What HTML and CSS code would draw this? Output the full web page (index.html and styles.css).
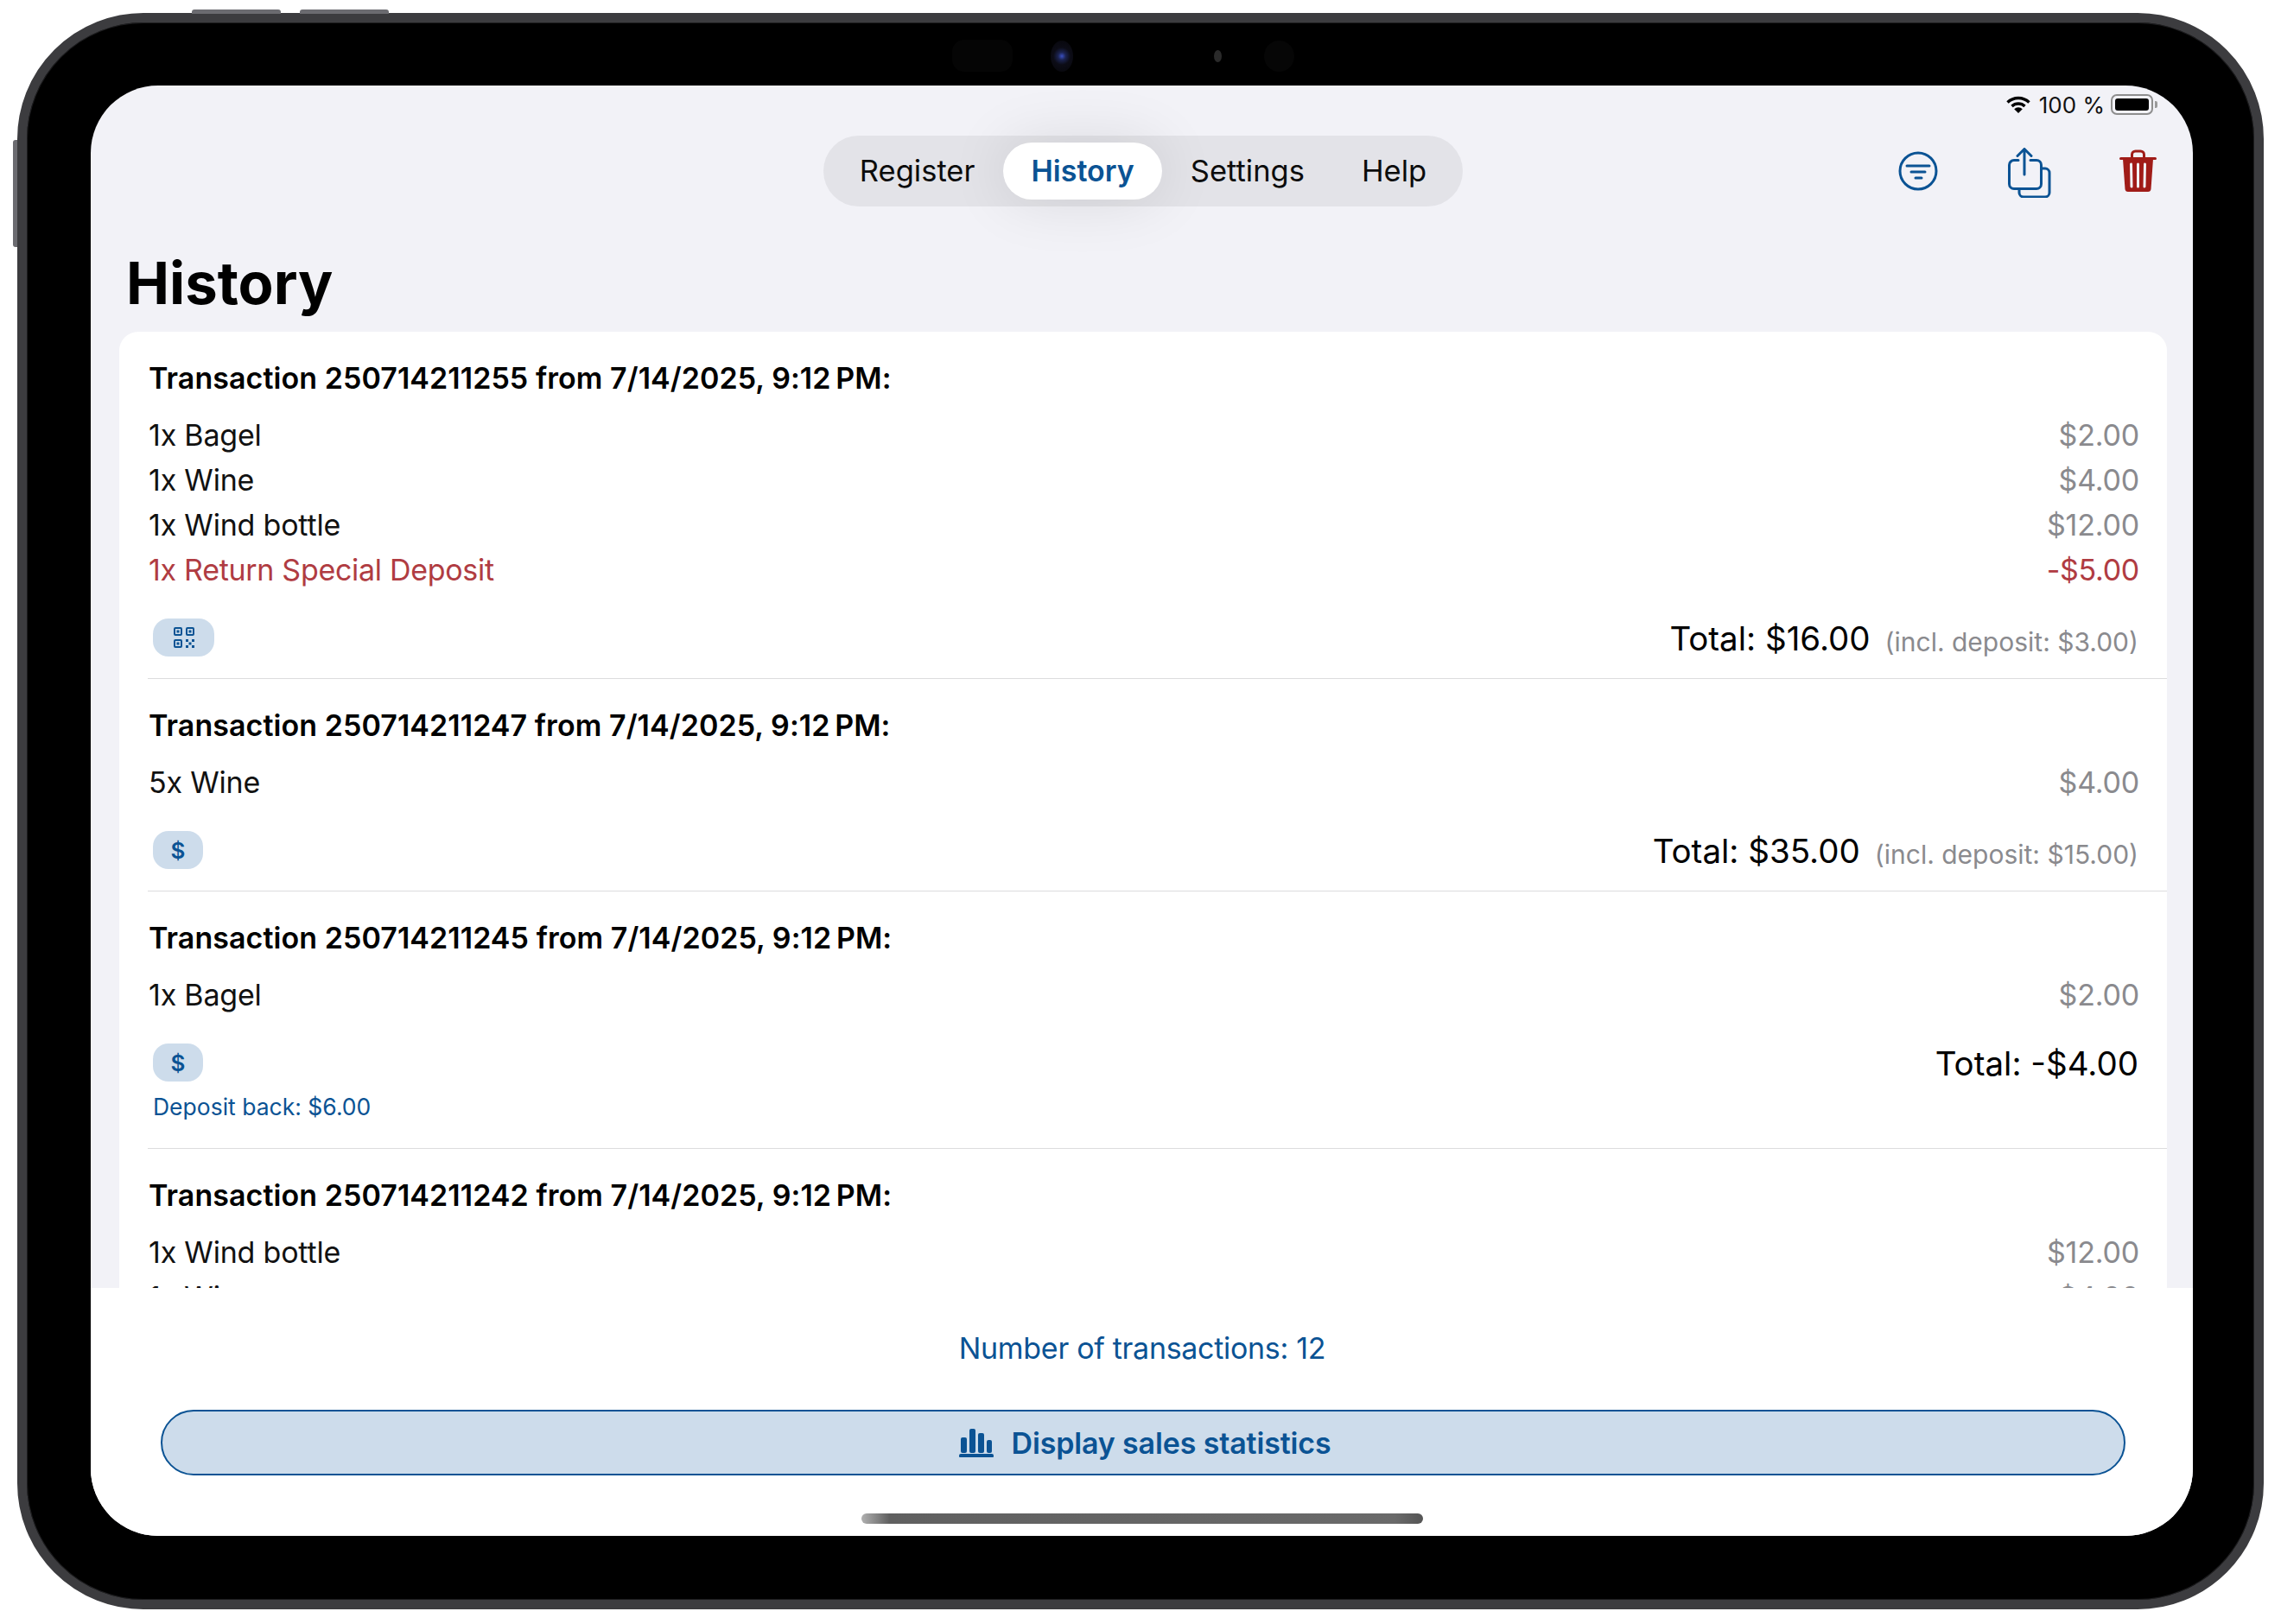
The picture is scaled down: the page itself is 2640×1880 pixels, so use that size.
FILE: index.html
```html
<!DOCTYPE html>
<html lang="en">
<head>
    <meta charset="UTF-8">
    <meta name="viewport" content="width=device-width, initial-scale=1.0">
    <title>History</title>
    <link rel="stylesheet" href="styles.css">
</head>
<body>

    <div class="device">
        <span class="side-btn top-btn-a"></span>
        <span class="side-btn top-btn-b"></span>
        <span class="side-btn left-btn"></span>

        <div class="sensors">
            <span class="sensor sensor-wide"></span>
            <span class="sensor camera"></span>
            <span class="sensor speck"></span>
            <span class="sensor sensor-round"></span>
        </div>

        <div class="screen">
            <div class="status-bar">
                <svg class="wifi" width="28" height="20" viewBox="0 0 28 20">
                    <path d="M1.5 7.5a18 18 0 0 1 25 0" fill="none" stroke="#000" stroke-width="3.4"/>
                    <path d="M6.5 12a11 11 0 0 1 15 0" fill="none" stroke="#000" stroke-width="3.4"/>
                    <path d="M14 20l-4.800-4.800a7 7 0 0 1 9.600 0z" fill="#000"/>
                </svg>
                <span class="battery-text">100 %</span>
                <span class="battery"><span class="battery-fill"></span></span>
                <span class="battery-cap"></span>
            </div>

            <div class="top-bar">
                <div class="tabs">
                    <span class="tab">Register</span>
                    <span class="tab active">History</span>
                    <span class="tab">Settings</span>
                    <span class="tab">Help</span>
                </div>
                <div class="actions">
                    <svg class="icon-filter" width="46" height="46" viewBox="0 0 46 46" fill="none" stroke="#0b5394" stroke-width="3">
                        <circle cx="23" cy="23" r="21"/>
                        <path d="M10 17h26M15 24h16M20 31h7" stroke-linecap="round"/>
                    </svg>
                    <svg class="icon-share" width="50" height="58" viewBox="0 0 50 58" fill="none" stroke="#0b5394" stroke-width="3" stroke-linecap="round" stroke-linejoin="round">
                        <path d="M12 14.500H7a5.500 5.500 0 0 0-5.500 5.500v22A5.500 5.500 0 0 0 7 47.500h26a5.500 5.500 0 0 0 5.500-5.500V20a5.500 5.500 0 0 0-5.500-5.500h-7"/>
                        <path d="M19 31V2M11 9.500L19 1.500l8 8"/>
                        <path d="M38.500 24H43a5 5 0 0 1 5 5v23a5 5 0 0 1-5 5H18a5 5 0 0 1-5-5v-4.500"/>
                    </svg>
                    <svg class="icon-trash" width="43" height="50" viewBox="0 0 43 50">
                        <path d="M14.500 10V6a4 4 0 0 1 4-4h6a4 4 0 0 1 4 4v4" fill="none" stroke="#a01c18" stroke-width="3"/>
                        <rect x="0" y="9" width="43" height="3" rx="1.500" fill="#a01c18"/>
                        <path d="M4 11h35l-2.500 35a3.500 3.500 0 0 1-3.500 3H10a3.500 3.500 0 0 1-3.500-3z" fill="#a01c18"/>
                        <path d="M13.500 17l.5 26M21.500 17v26M29.500 17l-.5 26" stroke="#f2f2f7" stroke-width="3" stroke-linecap="round"/>
                    </svg>
                </div>
            </div>

            <h1 class="page-title">History</h1>

            <div class="list">
                <section class="transaction">
                    <h2>Transaction 250714211255 from 7/14/2025, 9:12&#8239;PM:</h2>
                    <div class="line"><span>1x Bagel</span><span class="price">$2.00</span></div>
                    <div class="line"><span>1x Wine</span><span class="price">$4.00</span></div>
                    <div class="line"><span>1x Wind bottle</span><span class="price">$12.00</span></div>
                    <div class="line return"><span>1x Return Special Deposit</span><span class="price">-$5.00</span></div>
                    <div class="summary">
                        <span class="badge badge-qr">
                            <svg width="24" height="24" viewBox="0 0 24 24" fill="#0b5394">
                                <path fill-rule="evenodd" d="M2 0h6a2 2 0 0 1 2 2v6a2 2 0 0 1-2 2H2a2 2 0 0 1-2-2V2a2 2 0 0 1 2-2zm0 2v6h6V2zM16 0h6a2 2 0 0 1 2 2v6a2 2 0 0 1-2 2h-6a2 2 0 0 1-2-2V2a2 2 0 0 1 2-2zm0 2v6h6V2zM2 14h6a2 2 0 0 1 2 2v6a2 2 0 0 1-2 2H2a2 2 0 0 1-2-2v-6a2 2 0 0 1 2-2zm0 2v6h6v-6z"/>
                                <path d="M3.500 3.500h3v3h-3zM17.500 3.500h3v3h-3zM3.500 17.500h3v3h-3zM14 14h3v3h-3zM21 14h3v3h-3zM17.500 17.500h3v3h-3zM14 21h3v3h-3zM21 21h3v3h-3z"/>
                            </svg>
                        </span>
                        <span class="total">Total: $16.00</span>
                        <span class="deposit">(incl. deposit: $3.00)</span>
                    </div>
                </section>

                <section class="transaction">
                    <h2>Transaction 250714211247 from 7/14/2025, 9:12&#8239;PM:</h2>
                    <div class="line"><span>5x Wine</span><span class="price">$4.00</span></div>
                    <div class="summary">
                        <span class="badge">$</span>
                        <span class="total">Total: $35.00</span>
                        <span class="deposit">(incl. deposit: $15.00)</span>
                    </div>
                </section>

                <section class="transaction">
                    <h2>Transaction 250714211245 from 7/14/2025, 9:12&#8239;PM:</h2>
                    <div class="line"><span>1x Bagel</span><span class="price">$2.00</span></div>
                    <div class="summary">
                        <span class="badge">$</span>
                        <span class="total">Total: -$4.00</span>
                    </div>
                    <p class="deposit-back">Deposit back: $6.00</p>
                </section>

                <section class="transaction">
                    <h2>Transaction 250714211242 from 7/14/2025, 9:12&#8239;PM:</h2>
                    <div class="line"><span>1x Wind bottle</span><span class="price">$12.00</span></div>
                    <div class="line"><span>1x Wine</span><span class="price">$4.00</span></div>
                </section>
            </div>

            <div class="bottom-panel">
                <p class="count">Number of transactions: 12</p>
                <button class="stats-btn">
                    <svg width="40" height="33" viewBox="0 0 40 33" fill="#0b5394">
                        <rect x="2" y="10" width="7" height="18" rx="2"/>
                        <rect x="12" y="0" width="7" height="28" rx="2"/>
                        <rect x="22" y="5" width="7" height="23" rx="2"/>
                        <rect x="32" y="13" width="6" height="15" rx="2"/>
                        <rect x="0" y="29" width="40" height="4.500" rx="2"/>
                    </svg>
                    Display sales statistics
                </button>
                <div class="home-bar"></div>
            </div>
        </div>
    </div>

</body>
</html>
```

FILE: styles.css
```css
/* General Styles */
* {
    margin: 0;
    padding: 0;
    box-sizing: border-box;
}

body {
    font-family: Inter, "Liberation Sans", sans-serif;
    background-color: white;
    width: 2640px;
    height: 1880px;
    padding: 15px 20px;
    overflow: hidden;
}

/* Device frame */
.device {
    position: relative;
    width: 2600px;
    height: 1848px;
    padding: 73px 71px 74px 74px;
    background-color: black;
    border: 11px solid #3c3c3f;
    border-radius: 146px;
    box-shadow: inset 0 0 0 1px #1d1d1f;
}

.side-btn {
    position: absolute;
    background-color: #6b6b70;
}

.top-btn-a, .top-btn-b {
    top: -15px;
    width: 103px;
    height: 5px;
    border-radius: 3px 3px 0 0;
}

.top-btn-a { left: 191px; }
.top-btn-b { left: 316px; }

.left-btn {
    left: -16px;
    top: 136px;
    width: 5px;
    height: 124px;
    border-radius: 3px 0 0 3px;
}

.sensors {
    position: absolute;
    top: 20px;
    left: 1071px;
    display: flex;
    align-items: center;
}

.sensor { display: block; }

.sensor-wide {
    width: 70px;
    height: 37px;
    border-radius: 14px;
    background-color: #050505;
}

.camera {
    width: 26px;
    height: 36px;
    margin-left: 44px;
    border-radius: 50%;
    background: radial-gradient(circle, #3a4fc0 0, #1b2350 20%, #0c0c16 45%, #06060a 100%);
}

.speck {
    width: 9px;
    height: 14px;
    margin-left: 163px;
    border-radius: 50%;
    background-color: #2a2a2a;
}

.sensor-round {
    width: 35px;
    height: 36px;
    margin-left: 49px;
    border-radius: 50%;
    background-color: #060606;
}

/* Screen */
.screen {
    display: flex;
    flex-direction: column;
    height: 100%;
    background-color: #f2f2f7;
    border-radius: 78px;
    overflow: hidden;
}

.status-bar {
    display: flex;
    justify-content: flex-end;
    align-items: center;
    height: 48px;
    padding: 0 41px 4px 0;
}

.wifi { margin-right: 10px; }

.battery-text {
    font-size: 26px;
    margin-right: 7px;
    color: #111;
}

.battery {
    display: block;
    width: 49px;
    height: 24px;
    padding: 3px;
    border: 2px solid #8e8e8e;
    border-radius: 7px;
}

.battery-fill {
    display: block;
    height: 100%;
    background-color: black;
    border-radius: 3px;
}

.battery-cap {
    display: block;
    width: 3px;
    height: 8px;
    margin-left: 2px;
    background-color: #9a9a9a;
    border-radius: 0 2px 2px 0;
}

.top-bar {
    display: grid;
    grid-template-columns: 1fr auto 1fr;
    align-items: center;
    height: 82px;
    margin-top: 10px;
}

.tabs {
    grid-column: 2;
    display: flex;
    align-items: center;
    height: 82px;
    padding: 0 9px;
    background-color: #e3e3e8;
    border-radius: 41px;
    margin-left: 3px;
}

.tab {
    font-size: 34.500px;
    line-height: 66px;
    padding: 0 33px;
    color: #0c0c0c;
    border-radius: 33px;
}

.tab.active {
    font-size: 34px;
    font-weight: 600;
    padding: 0 32px;
    color: #0b5394;
    background-color: white;
    box-shadow: 0 0 70px rgba(0, 0, 0, 0.11);
}

.actions {
    grid-column: 3;
    display: flex;
    align-items: flex-start;
    justify-content: flex-end;
    height: 82px;
    padding-right: 42px;
}

.icon-filter { margin-top: 18px; }
.icon-share { margin-left: 81px; margin-top: 14px; }
.icon-trash { margin-left: 79px; margin-top: 16px; }

.page-title {
    font-size: 67px;
    font-weight: 700;
    line-height: 80px;
    margin: 49px 0 0 41px;
    height: 96px;
    color: black;
}

/* Transaction list */
.list {
    flex: 1;
    margin: 0 30px 0 33px;
    background-color: white;
    border-radius: 22px 22px 0 0;
    overflow: hidden;
}

.transaction {
    margin-left: 33px;
    padding: 34px 32px 24px 1px;
    border-bottom: 1px solid #dcdcde;
}

.transaction h2 {
    font-size: 34px;
    font-weight: 600;
    letter-spacing: 0.060px;
    line-height: 40px;
    margin-bottom: 20px;
    color: black;
}

.line {
    display: flex;
    justify-content: space-between;
    font-size: 34px;
    letter-spacing: -0.200px;
    line-height: 52px;
    color: #111;
}

.price { color: #8a8a8e; }

.line.return {
    letter-spacing: -0.300px;
    color: #b03c42;
}

.line.return .price { color: #b03c42; }

.summary {
    display: flex;
    align-items: center;
    height: 46px;
    margin-top: 29px;
    padding-right: 1px;
}

.badge {
    display: flex;
    justify-content: center;
    align-items: center;
    width: 58px;
    height: 44px;
    margin: 0 auto 0 5px;
    font-size: 26px;
    font-weight: 600;
    color: #0b5394;
    background-color: #cddceb;
    border-radius: 18px;
}

.badge-qr { width: 71px; }

.total {
    margin-top: 1px;
    font-size: 38.500px;
    color: black;
}

.deposit {
    margin: 10px 0 0 17px;
    font-size: 30px;
    color: #8a8a8e;
}

.deposit-back {
    margin: 12px 0 0 5px;
    font-size: 26.500px;
    line-height: 32px;
    color: #0b5394;
    padding-bottom: 8px;
}

/* Bottom panel */
.bottom-panel {
    display: flex;
    flex-direction: column;
    align-items: center;
    height: 287px;
    background-color: white;
}

.count {
    margin: 50px 0 0 1px;
    font-size: 34px;
    letter-spacing: -0.300px;
    line-height: 40px;
    color: #0b5394;
}

.stats-btn {
    display: flex;
    justify-content: center;
    align-items: center;
    gap: 21px;
    width: 2274px;
    height: 76px;
    margin: 51px 0 0 3px;
    padding-left: 4px;
    font-family: inherit;
    font-size: 34px;
    font-weight: 600;
    letter-spacing: -0.150px;
    color: #0b5394;
    background-color: #cddceb;
    border: 2px solid #0b5394;
    border-radius: 38px;
}

.home-bar {
    width: 650px;
    height: 12px;
    margin-top: 44px;
    background: linear-gradient(90deg, #b0b0b0, #606060 5%, #6a6a6a 95%, #555);
    border-radius: 6px;
}
```
